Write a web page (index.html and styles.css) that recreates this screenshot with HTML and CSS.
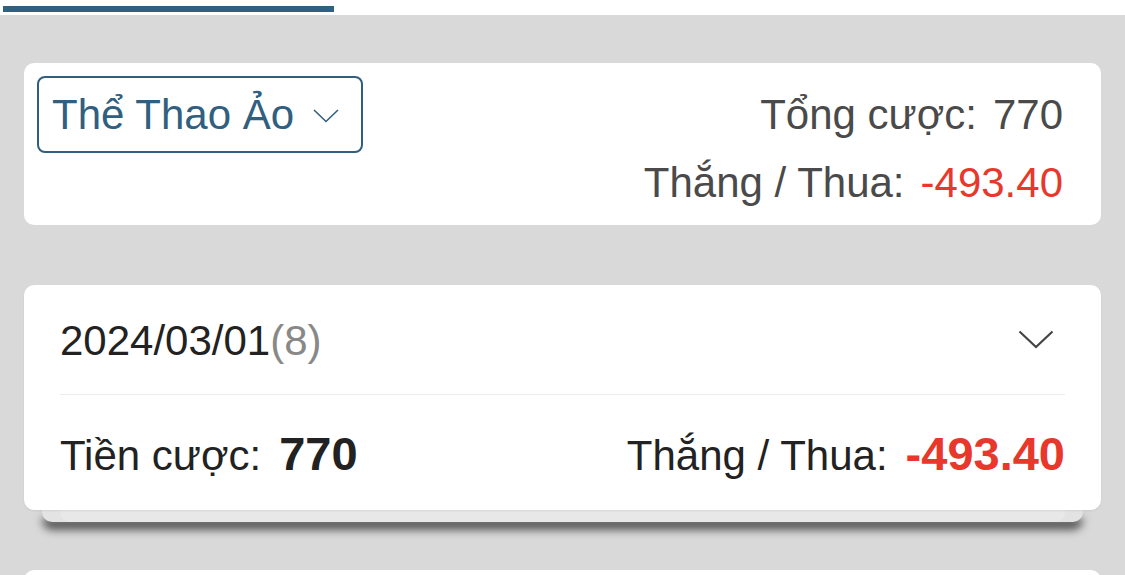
FILE: index.html
```html
<!DOCTYPE html>
<html lang="vi">
<head>
<meta charset="utf-8">
<link rel="stylesheet" href="styles.css">
</head>
<body>
<div class="topbar"><div class="tab"></div></div>
<main class="content">
  <section class="card summary">
    <div class="select">
      <span class="select-label">Thể Thao Ảo</span>
      <svg class="select-chev" width="26" height="14" viewBox="0 0 26 14"><path d="M1 1 L13 12.5 L25 1" fill="none" stroke="#305f7f" stroke-width="1.6"/></svg>
    </div>
    <div class="totals">
      <div class="line"><span>Tổng cược:</span><span class="val">770</span></div>
      <div class="line"><span>Thắng / Thua:</span><span class="val red">-493.40</span></div>
    </div>
  </section>

  <div class="group">
    <section class="card day">
      <div class="day-head">
        <div class="date">2024/03/01<span class="count">(8)</span></div>
        <svg class="chev" width="36" height="19" viewBox="0 0 36 19"><path d="M1.5 1.5 L18 17 L34.5 1.5" fill="none" stroke="#444" stroke-width="2.2"/></svg>
      </div>
      <div class="day-row">
        <div class="pair"><span>Tiền cược:</span><span class="big">770</span></div>
        <div class="pair"><span>Thắng / Thua:</span><span class="big red">-493.40</span></div>
      </div>
    </section>
    <div class="stack"><div class="stack-inner"></div></div>
  </div>

  <section class="card next"></section>
</main>
</body>
</html>
```
FILE: styles.css
```css
* { box-sizing: border-box; }
html, body { margin: 0; padding: 0; }
body {
  background: #d9d9d9;
  font-family: "Liberation Sans", Arial, Helvetica, sans-serif;
  font-size: 42px;
  overflow: hidden;
  height: 575px;
}
.topbar {
  height: 15px;
  background: #ffffff;
  padding-top: 6px;
}
.tab {
  margin-left: 3px;
  width: 331px;
  height: 6px;
  background: #305f7f;
}
.content {
  padding: 48px 24px 0;
}
.card {
  background: #ffffff;
  border-radius: 10px;
}
.summary {
  height: 162px;
  padding: 13px 38px 0 13px;
  display: flex;
  justify-content: space-between;
  align-items: flex-start;
}
.select {
  width: 326px;
  height: 77px;
  border: 2px solid #305f7f;
  border-radius: 8px;
  padding: 0 22px 0 13px;
  display: flex;
  align-items: center;
  justify-content: space-between;
  color: #305f7f;
  line-height: 72px;
}
.select-chev { margin-top: 2px; }
.totals {
  padding-top: 5px;
  color: #4a4a4a;
  line-height: 68px;
  display: flex;
  flex-direction: column;
  align-items: flex-end;
}
.line { display: flex; }
.val { margin-left: 16px; }
.red { color: #e8372b; }
.group { margin-top: 60px; }
.day {
  padding: 0 36px;
  box-shadow: 0 1px 2px rgba(0,0,0,0.08);
  position: relative;
  z-index: 2;
}
.day-head {
  height: 110px;
  display: flex;
  justify-content: space-between;
  align-items: center;
  border-bottom: 1px solid #ececec;
  color: #222222;
  padding-top: 3px;
}
.chev { margin-right: 11px; margin-top: -4px; }
.count { color: #888888; }
.day-row {
  height: 115px;
  padding-top: 29px;
  display: flex;
  justify-content: space-between;
  align-items: baseline;
  color: #222222;
  line-height: 60px;
}
.pair { display: flex; align-items: baseline; }
.big {
  font-weight: bold;
  font-size: 47px;
  margin-left: 18px;
}
.stack {
  margin: 0 18px;
  height: 12px;
  background: #e3e3e3;
  border-radius: 0 0 10px 10px;
  box-shadow: 0 8px 8px rgba(0,0,0,0.6);
}
.stack-inner {
  margin: 0 18px;
  height: 12px;
  background: #e8e8e8;
  border-radius: 0 0 10px 10px;
}
.next {
  margin-top: 48px;
  height: 80px;
}
```
